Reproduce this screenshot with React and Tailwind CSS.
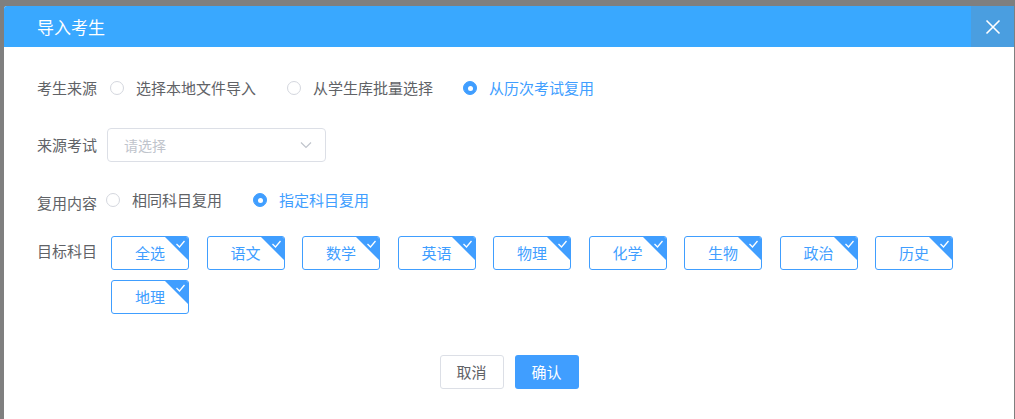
import { useState } from "react";

const subjects = ["全选", "语文", "数学", "英语", "物理", "化学", "生物", "政治", "历史", "地理"];

const Radio = ({ checked, label, className = "" }) => (
  <label className={`flex items-center cursor-pointer ${className}`}>
    <span
      className={`w-[14px] h-[14px] rounded-full border flex items-center justify-center shrink-0 ${
        checked ? "bg-[#409eff] border-[#409eff]" : "bg-white border-[#d4d7de]"
      }`}
    >
      {checked && <span className="w-[5px] h-[5px] rounded-full bg-white" />}
    </span>
    <span className={`ml-[12px] text-[15px] ${checked ? "text-[#409eff]" : "text-[#606266]"}`}>{label}</span>
  </label>
);

const SubjectTag = ({ name }) => (
  <div className="relative w-[78px] h-[34px] border border-[#409eff] rounded-[3px] flex items-center justify-center text-[15px] text-[#409eff] overflow-hidden bg-white">
    {name}
    <svg className="absolute top-0 right-0" width="23" height="23" viewBox="0 0 23 23">
      <polygon points="0,0 23,0 23,23" fill="#409eff" />
      <path d="M11.5 7 L14.5 10 L19.5 4" fill="none" stroke="#fff" strokeWidth="1.3" />
    </svg>
  </div>
);

export default function App() {
  const [source] = useState(2);

  return (
    <div className="w-[1015px] h-[419px] bg-[#7f7f7f] pl-[4px] pt-[6px] overflow-hidden" style={{ fontFamily: '"Noto Sans CJK SC", "Noto Sans", sans-serif' }}>
      <div className="w-[1010px] h-[420px] bg-white rounded-tl-[3px] overflow-hidden">
        {/* Header */}
        <div className="h-[41px] bg-[#39a8ff] flex items-center justify-between">
          <span className="pl-[33px] text-white text-[17px]">导入考生</span>
          <button className="w-[43px] h-[41px] bg-[#4a9ee0] flex items-center justify-center">
            <svg width="16" height="16" viewBox="0 0 16 16">
              <path d="M1.5 1.5 L14.5 14.5 M14.5 1.5 L1.5 14.5" stroke="#fff" strokeWidth="1.6" />
            </svg>
          </button>
        </div>

        {/* Body */}
        <div className="pl-[33px] pt-[30px]">
          <div className="flex items-center h-[22px]">
            <span className="w-[73px] text-[15px] text-[#606266]">考生来源</span>
            <Radio checked={source === 0} label="选择本地文件导入" />
            <Radio checked={source === 1} label="从学生库批量选择" className="ml-[31px]" />
            <Radio checked={source === 2} label="从历次考试复用" className="ml-[30px]" />
          </div>

          <div className="flex items-center mt-[29px]">
            <span className="w-[70px] text-[15px] text-[#606266]">来源考试</span>
            <div className="w-[219px] h-[34px] border border-[#dcdfe6] rounded-[4px] flex items-center justify-between px-[16px] pr-[13px]">
              <span className="text-[14px] text-[#c0c4cc]">请选择</span>
              <svg width="12" height="8" viewBox="0 0 12 8">
                <path d="M1 1.5 L6 6.5 L11 1.5" fill="none" stroke="#c0c4cc" strokeWidth="1.2" />
              </svg>
            </div>
          </div>

          <div className="flex items-center mt-[27px] h-[22px]">
            <span className="w-[69px] text-[15px] text-[#606266] pt-[7px]">复用内容</span>
            <Radio checked={false} label="相同科目复用" />
            <Radio checked={true} label="指定科目复用" className="ml-[31px]" />
          </div>

          <div className="flex mt-[25px]">
            <span className="w-[74px] text-[15px] text-[#606266] pt-[4px] shrink-0">目标科目</span>
            <div className="flex flex-wrap gap-x-[17.5px] gap-y-[10px] w-[880px]">
              {subjects.map((s) => (
                <SubjectTag key={s} name={s} />
              ))}
            </div>
          </div>
        </div>

        <div className="flex justify-center gap-[11px] mt-[41px]">
          <button className="w-[64px] h-[34px] border border-[#dcdfe6] rounded-[3px] text-[15px] text-[#606266] bg-white">取消</button>
          <button className="w-[64px] h-[34px] rounded-[3px] text-[15px] text-white bg-[#409eff]">确认</button>
        </div>
      </div>
    </div>
  );
}
